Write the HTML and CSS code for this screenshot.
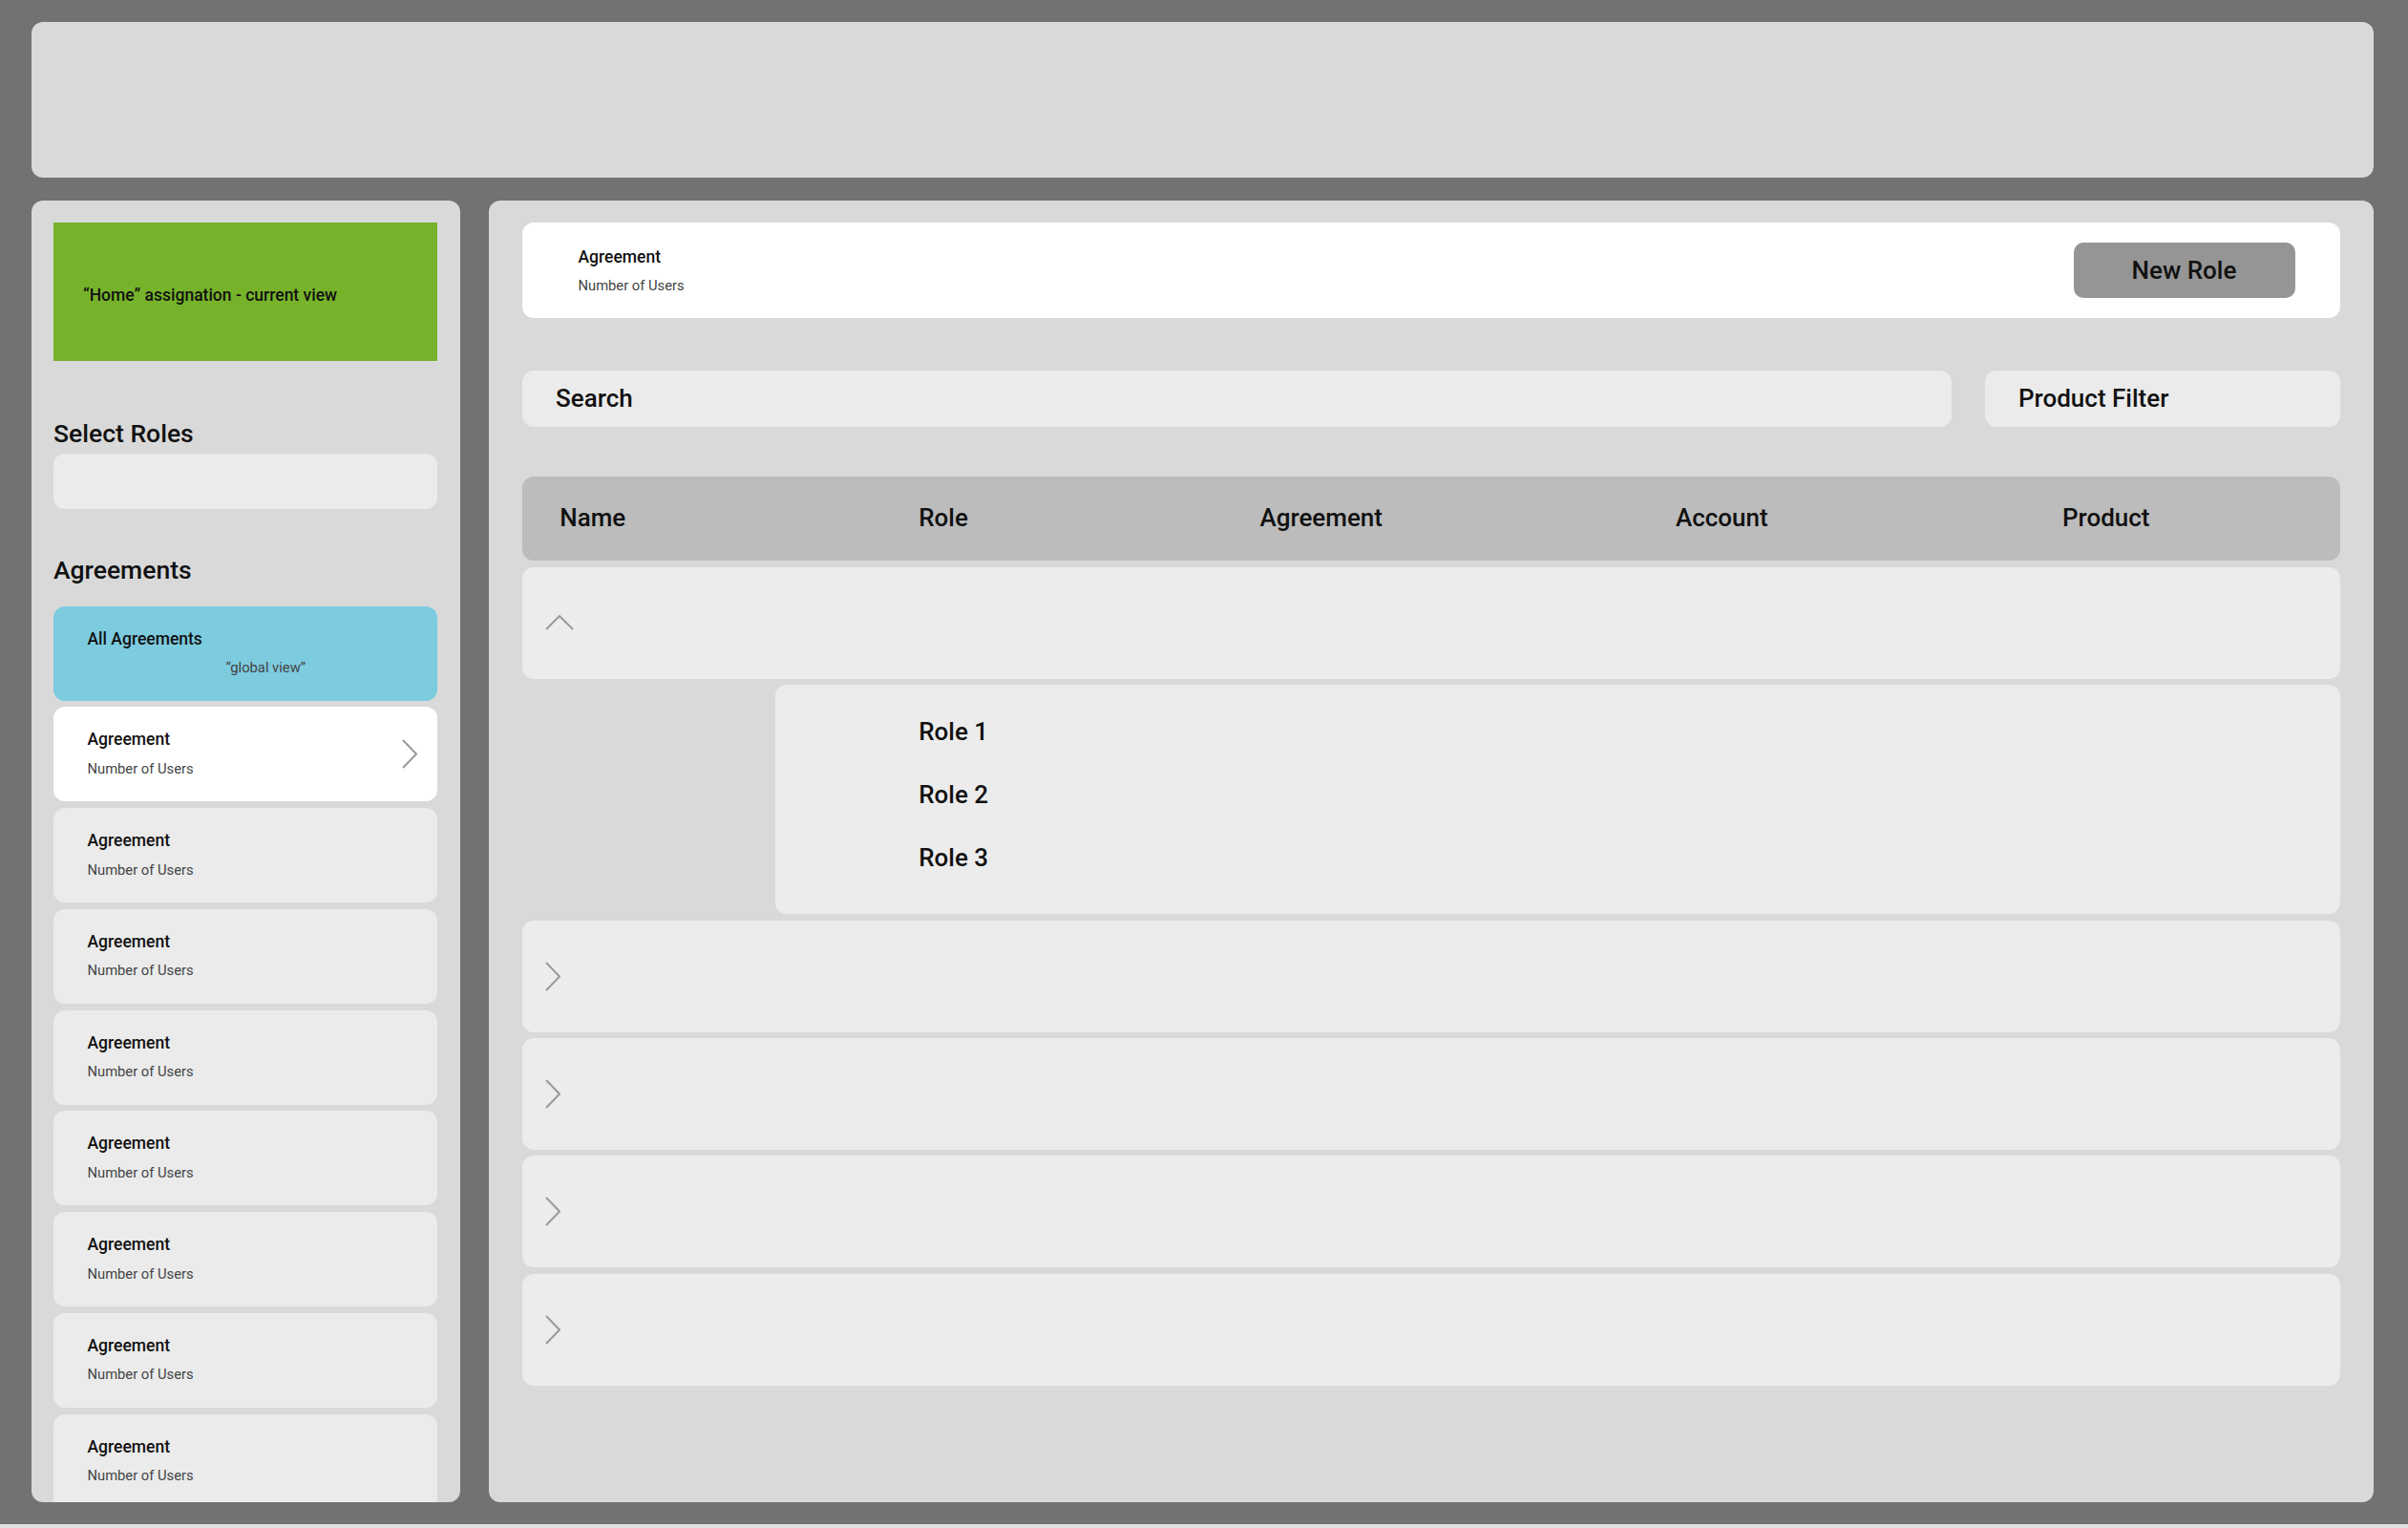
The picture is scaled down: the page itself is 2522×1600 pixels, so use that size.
FILE: index.html
```html
<!DOCTYPE html>
<html lang="en">
<head>
<meta charset="utf-8">
<title>Role assignation</title>
<link rel="stylesheet" href="styles.css">
</head>
<body>
<div class="app">
  <header class="topbar"></header>
  <div class="panels">
    <aside class="sidebar">
      <div class="home-box">“Home” assignation - current view</div>
      <h2 class="side-heading roles-heading">Select Roles</h2>
      <div class="select-input"></div>
      <h2 class="side-heading agreements-heading">Agreements</h2>
      <div class="agreement-list">
        <div class="agr-card agr-all">
          <div class="agr-title">All Agreements</div>
          <div class="agr-sub agr-global">“global view”</div>
        </div>
        <div class="agr-card agr-active">
          <div class="agr-title">Agreement</div>
          <div class="agr-sub">Number of Users</div>
          <svg class="agr-chevron" viewBox="0 0 16 31" width="16" height="31"><polyline points="1,1 15,15.5 1,30" fill="none" stroke="#9a9a9a" stroke-width="2"/></svg>
        </div>
        <div class="agr-card"><div class="agr-title">Agreement</div><div class="agr-sub">Number of Users</div></div>
        <div class="agr-card"><div class="agr-title">Agreement</div><div class="agr-sub">Number of Users</div></div>
        <div class="agr-card"><div class="agr-title">Agreement</div><div class="agr-sub">Number of Users</div></div>
        <div class="agr-card"><div class="agr-title">Agreement</div><div class="agr-sub">Number of Users</div></div>
        <div class="agr-card"><div class="agr-title">Agreement</div><div class="agr-sub">Number of Users</div></div>
        <div class="agr-card"><div class="agr-title">Agreement</div><div class="agr-sub">Number of Users</div></div>
        <div class="agr-card"><div class="agr-title">Agreement</div><div class="agr-sub">Number of Users</div></div>
      </div>
    </aside>
    <main class="main">
      <div class="agr-header">
        <div class="agr-header-text">
          <div class="agr-title">Agreement</div>
          <div class="agr-sub">Number of Users</div>
        </div>
        <button class="new-role">New Role</button>
      </div>
      <div class="filters">
        <div class="search">Search</div>
        <div class="product-filter">Product Filter</div>
      </div>
      <div class="table">
        <div class="thead">
          <div class="col col-name">Name</div>
          <div class="col col-role">Role</div>
          <div class="col col-agr">Agreement</div>
          <div class="col col-acc">Account</div>
          <div class="col col-prod">Product</div>
        </div>
        <div class="trow">
          <svg class="chev-up" viewBox="0 0 30 16" width="30" height="16"><polyline points="1,15 15,1 29,15" fill="none" stroke="#9a9a9a" stroke-width="2"/></svg>
        </div>
        <div class="roles-panel">
          <div class="role-item">Role 1</div>
          <div class="role-item">Role 2</div>
          <div class="role-item">Role 3</div>
        </div>
        <div class="trow"><svg class="chev-right" viewBox="0 0 16 31" width="16" height="31"><polyline points="1,1 15,15.5 1,30" fill="none" stroke="#9a9a9a" stroke-width="2"/></svg></div>
        <div class="trow"><svg class="chev-right" viewBox="0 0 16 31" width="16" height="31"><polyline points="1,1 15,15.5 1,30" fill="none" stroke="#9a9a9a" stroke-width="2"/></svg></div>
        <div class="trow"><svg class="chev-right" viewBox="0 0 16 31" width="16" height="31"><polyline points="1,1 15,15.5 1,30" fill="none" stroke="#9a9a9a" stroke-width="2"/></svg></div>
        <div class="trow"><svg class="chev-right" viewBox="0 0 16 31" width="16" height="31"><polyline points="1,1 15,15.5 1,30" fill="none" stroke="#9a9a9a" stroke-width="2"/></svg></div>
      </div>
    </main>
  </div>
</div>
</body>
</html>
```

FILE: styles.css
```css
html {
  background: #dfe3df;
}
body {
  margin: 0;
  font-family: Roboto, "Liberation Sans", Arial, sans-serif;
  color: #000;
}
.app {
  box-sizing: border-box;
  width: 2522px;
  height: 1596px;
  background: #727272;
  padding: 23px 36px 23px 32.5px;
  display: flex;
  flex-direction: column;
  gap: 24px;
}
.topbar {
  height: 162.5px;
  flex: none;
  background: #d9d9d9;
  border-radius: 12px;
}
.panels {
  flex: 1;
  display: flex;
  gap: 30px;
  min-height: 0;
}

/* Sidebar */
.sidebar {
  box-sizing: border-box;
  width: 449px;
  flex: none;
  background: #d9d9d9;
  border-radius: 12px;
  padding: 23.5px 23.5px 0 23.5px;
  overflow: hidden;
  display: flex;
  flex-direction: column;
}
.home-box {
  box-sizing: border-box;
  height: 145px;
  flex: none;
  background: #77b32a;
  display: flex;
  align-items: center;
  padding: 6px 0 0 31px;
  font-size: 17.5px;
  font-weight: 500;
  color: #111;
}
.side-heading {
  margin: 0;
  font-size: 26.5px;
  font-weight: 500;
  line-height: 32px;
  color: #111;
}
.roles-heading {
  margin-top: 60px;
}
.select-input {
  margin-top: 5px;
  height: 58px;
  flex: none;
  background: #ebebeb;
  border-radius: 12px;
}
.agreements-heading {
  margin-top: 48px;
}
.agreement-list {
  margin-top: 21.5px;
  display: flex;
  flex-direction: column;
  gap: 6.75px;
}
.agr-card {
  position: relative;
  box-sizing: border-box;
  height: 99px;
  flex: none;
  background: #ebebeb;
  border-radius: 12px;
  padding: 23px 0 0 35.5px;
}
.agr-all {
  background: #7ccbdf;
}
.agr-active {
  background: #ffffff;
}
.agr-title {
  font-size: 17.5px;
  font-weight: 500;
  line-height: 22px;
  color: #111;
}
.agr-sub {
  margin-top: 10.5px;
  font-size: 14.75px;
  line-height: 18px;
  color: #444;
}
.agr-global {
  margin-left: 145px;
}
.agr-chevron {
  position: absolute;
  right: 21px;
  top: 34px;
}

/* Main */
.main {
  box-sizing: border-box;
  flex: 1;
  background: #d9d9d9;
  border-radius: 12px;
  padding: 23.5px 35.5px 0 35px;
  display: flex;
  flex-direction: column;
}
.agr-header {
  box-sizing: border-box;
  height: 100px;
  flex: none;
  background: #ffffff;
  border-radius: 12px;
  display: flex;
  align-items: center;
  justify-content: space-between;
  padding: 0 47px 0 59px;
}
.agr-header-text {
  padding-top: 0;
}
.new-role {
  width: 232px;
  height: 58px;
  border: none;
  border-radius: 10px;
  background: #959595;
  font-family: Roboto, "Liberation Sans", Arial, sans-serif;
  font-size: 26px;
  font-weight: 500;
  color: #111;
  padding: 0;
}
.filters {
  margin-top: 55px;
  display: flex;
  gap: 34.5px;
  height: 58.5px;
  flex: none;
}
.search,
.product-filter {
  box-sizing: border-box;
  background: #ebebeb;
  border-radius: 12px;
  display: flex;
  align-items: center;
  padding-left: 35.5px;
  font-size: 26px;
  font-weight: 500;
  color: #111;
}
.search {
  flex: 1;
}
.product-filter {
  width: 372px;
  flex: none;
}
.table {
  margin-top: 52.5px;
  display: flex;
  flex-direction: column;
  gap: 6.35px;
}
.thead {
  box-sizing: border-box;
  height: 88px;
  background: #bcbcbc;
  border-radius: 12px;
  display: grid;
  grid-template-columns: 376px 357.3px 435.5px 405px 1fr;
  align-items: center;
  padding: 0 0 2px 39.7px;
  font-size: 26px;
  font-weight: 500;
  color: #111;
  margin-bottom: 0.5px;
}
.trow {
  box-sizing: border-box;
  height: 117px;
  background: #ececec;
  border-radius: 12px;
  display: flex;
  align-items: center;
  padding-left: 24px;
}
.chev-right {
  display: block;
}
.chev-up {
  display: block;
}
.roles-panel {
  box-sizing: border-box;
  margin-left: 265px;
  height: 240px;
  background: #ececec;
  border-radius: 12px;
  padding: 16px 0 0 150.7px;
}
.role-item {
  font-size: 26px;
  font-weight: 500;
  line-height: 66px;
  color: #111;
}
```
